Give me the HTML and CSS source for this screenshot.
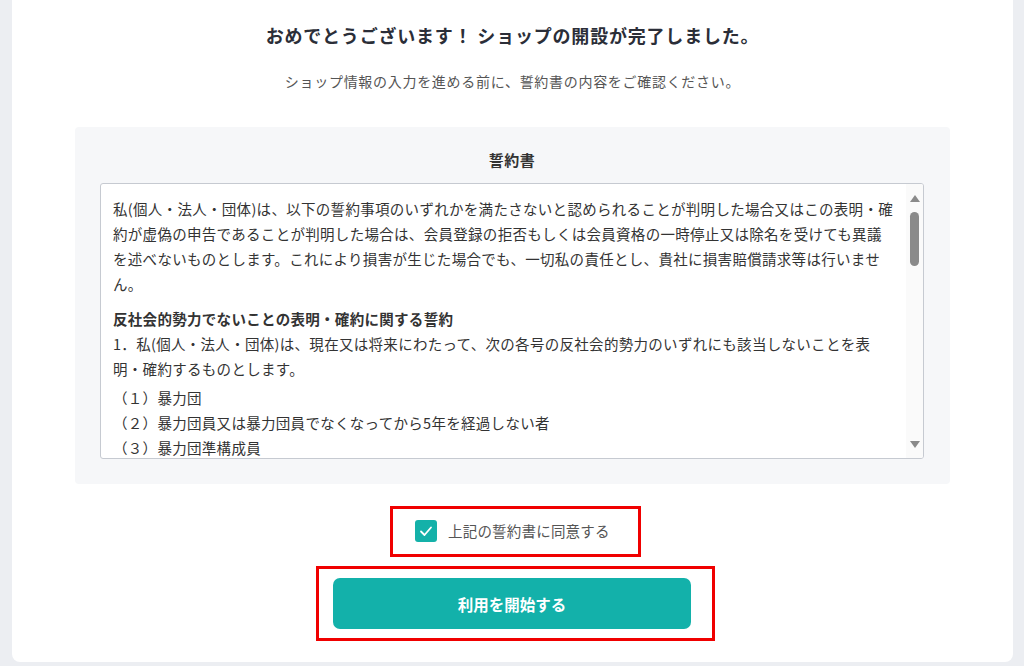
FILE: index.html
```html
<!DOCTYPE html>
<html lang="ja">
<head>
  <meta charset="utf-8">
  <meta name="viewport" content="width=device-width, initial-scale=1">
  <title>ショップ開設完了</title>
  <link rel="stylesheet" href="styles.css">
</head>
<body>

  <div class="card">
    <h1>おめでとうございます！ ショップの開設が完了しました。</h1>
    <p class="lead">ショップ情報の入力を進める前に、誓約書の内容をご確認ください。</p>

    <section class="pledge">
      <h2>誓約書</h2>
      <div class="pledge-box">
        <div class="pledge-text">
          <p>私(個人・法人・団体)は、以下の誓約事項のいずれかを満たさないと認められることが判明した場合又はこの表明・確約が虚偽の申告であることが判明した場合は、会員登録の拒否もしくは会員資格の一時停止又は除名を受けても異議を述べないものとします。これにより損害が生じた場合でも、一切私の責任とし、貴社に損害賠償請求等は行いません。</p>
          <h3>反社会的勢力でないことの表明・確約に関する誓約</h3>
          <p>1．私(個人・法人・団体)は、現在又は将来にわたって、次の各号の反社会的勢力のいずれにも該当しないことを表明・確約するものとします。</p>
          <ul>
            <li>（１）暴力団</li>
            <li>（２）暴力団員又は暴力団員でなくなってから5年を経過しない者</li>
            <li>（３）暴力団準構成員</li>
          </ul>
        </div>
        <div class="scrollbar">
          <span class="arrow-up"></span>
          <span class="thumb"></span>
          <span class="arrow-down"></span>
        </div>
      </div>
    </section>

    <div class="actions">
      <label class="agree mark">
        <span class="checkbox">
          <svg width="14" height="14" viewBox="0 0 14 14"><polyline points="2,7.5 5.5,11 12,3.5" fill="none" stroke="#fff" stroke-width="1.8" stroke-linecap="round" stroke-linejoin="round"/></svg>
        </span>
        上記の誓約書に同意する
      </label>
      <div class="start mark">
        <a href="#" class="button">利用を開始する</a>
      </div>
    </div>
  </div>

</body>
</html>
```

FILE: styles.css
```css
/* General Styling */
body {
  margin: 0;
  padding: 0;
  background-color: #eceef2;
  color: #333;
  font-family: "Noto Sans CJK JP", "Noto Sans", sans-serif;
}

.card {
  box-sizing: border-box;
  height: 662px;
  margin: 0 11px 0 12px;
  padding-top: 22px;
  background: white;
  border-radius: 0 0 8px 8px;
}

h1 {
  margin: 0;
  text-align: center;
  font-size: 18px;
  letter-spacing: 0.8px;
  line-height: 26px;
  font-weight: bold;
  color: #2b2e38;
}

.lead {
  margin: 23px 0 0;
  text-align: center;
  font-size: 14px;
  letter-spacing: 0.7px;
  line-height: 20px;
  color: #555;
}

/* Pledge box */
.pledge {
  width: 875px;
  box-sizing: border-box;
  margin: 36px auto 0;
  padding: 22px 26px 25px 25px;
  background-color: #f6f7f9;
  border-radius: 4px;
}

.pledge h2 {
  margin: 0 0 12px;
  text-align: center;
  font-size: 15px;
  letter-spacing: 0.5px;
  line-height: 22px;
  color: #333;
}

.pledge-box {
  display: flex;
  height: 276px;
  box-sizing: border-box;
  background: white;
  border: 1px solid #c6cad1;
  border-radius: 3px;
  overflow: hidden;
}

.pledge-text {
  flex: 1;
  padding: 12px 11px 0 12px;
  overflow: hidden;
  font-size: 14.5px;
  letter-spacing: 0.3px;
  line-height: 25px;
  color: #333;
}

.pledge-text p {
  margin: 0;
}

.pledge-text h3 {
  margin: 10px 0 0;
  font-size: 14.5px;
  line-height: 25px;
}

.pledge-text ul {
  list-style: none;
  margin: 4px 0 0;
  padding: 0;
}

/* Fake native scrollbar */
.scrollbar {
  display: flex;
  flex-direction: column;
  align-items: center;
  width: 17px;
  padding: 11px 0 10px;
  box-sizing: border-box;
  background: #fafafa;
}

.arrow-up {
  width: 0;
  height: 0;
  border-left: 5px solid transparent;
  border-right: 5px solid transparent;
  border-bottom: 7px solid #8a8a8a;
}

.thumb {
  width: 9px;
  height: 54px;
  margin-top: 10px;
  background: #8a8a8a;
  border-radius: 5px;
}

.arrow-down {
  width: 0;
  height: 0;
  margin-top: auto;
  border-left: 5px solid transparent;
  border-right: 5px solid transparent;
  border-top: 7px solid #8a8a8a;
}

/* Actions */
.actions {
  display: flex;
  flex-direction: column;
  align-items: center;
  gap: 9px;
  margin-top: 22px;
  padding-left: 6px;
}

.mark {
  box-sizing: border-box;
  border: 3px solid #f00000;
}

.agree {
  display: flex;
  align-items: center;
  gap: 11px;
  width: 251px;
  height: 51px;
  padding: 0 0 2px 22px;
  font-size: 14.5px;
  letter-spacing: 0.2px;
  color: #555;
  cursor: pointer;
}

.checkbox {
  display: flex;
  align-items: center;
  justify-content: center;
  width: 22px;
  height: 22px;
  background: #14b1a9;
  border-radius: 3px;
}

.start {
  width: 399px;
  height: 75px;
  padding: 9px 0 0 14px;
}

.button {
  display: flex;
  align-items: center;
  justify-content: center;
  width: 358px;
  height: 51px;
  background-color: #13b1aa;
  color: white;
  font-size: 15.5px;
  font-weight: bold;
  text-decoration: none;
  border-radius: 7px;
}
```
